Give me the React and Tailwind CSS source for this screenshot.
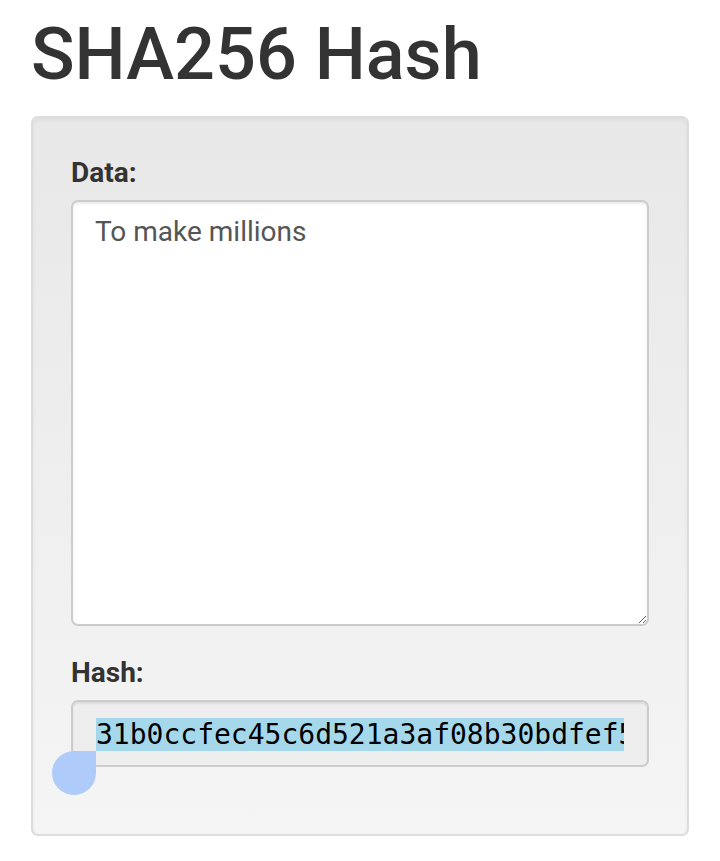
export default function App() {
  return (
    <div className="w-[720px] min-h-[861px] bg-white text-[#333]" style={{ fontFamily: "Roboto, 'Liberation Sans', sans-serif" }}>
      <h1 className="pt-[15px] pl-[31px] text-[72px] font-medium leading-[79px] text-[#333]">
        SHA256 Hash
      </h1>
      <div className="mx-[31px] mt-[22px] rounded-[7px] border-2 border-[#dcdcdc] bg-gradient-to-b from-[#e8e8e8] to-[#f5f5f5] pt-[36px] pb-[39px] px-[38px] shadow-[inset_0_2px_4px_rgba(0,0,0,0.05)]">
        <div className="mb-[28px]">
          <label className="block mb-[9px] text-[28px] leading-[37px] font-bold text-[#333]">Data:</label>
          <textarea
            readOnly
            defaultValue="To make millions"
            className="block w-full h-[426px] rounded-[7px] border-2 border-[#ccc] bg-white pt-[10px] px-[22px] text-[28px] leading-[40px] text-[#555] shadow-[inset_0_2px_2px_rgba(0,0,0,0.075)] outline-none"
            style={{ fontFamily: "Roboto, 'Liberation Sans', sans-serif" }}
          />
        </div>
        <div className="mb-[28px]">
          <label className="block mb-[9px] text-[28px] leading-[37px] font-bold text-[#333]">Hash:</label>
          <div className="relative h-[67px] rounded-[7px] border-2 border-[#ccc] bg-[#eee] py-[16px] px-[23px] shadow-[inset_0_2px_2px_rgba(0,0,0,0.075)]">
            <div className="overflow-hidden whitespace-nowrap h-[33px]">
              <span className="bg-[#a6d8ec] text-black text-[28px] leading-[33px]" style={{ fontFamily: "'DejaVu Sans Mono', monospace" }}>
                31b0ccfec45c6d521a3af08b30bdfef5a2c9e1f07d3b84c6e5f19a20b7d43c81
              </span>
            </div>
            <div className="absolute left-[-21px] top-[49px] w-[44px] h-[44px] rounded-full rounded-tr-none bg-[#aecbfa]" />
          </div>
        </div>
      </div>
    </div>
  );
}
